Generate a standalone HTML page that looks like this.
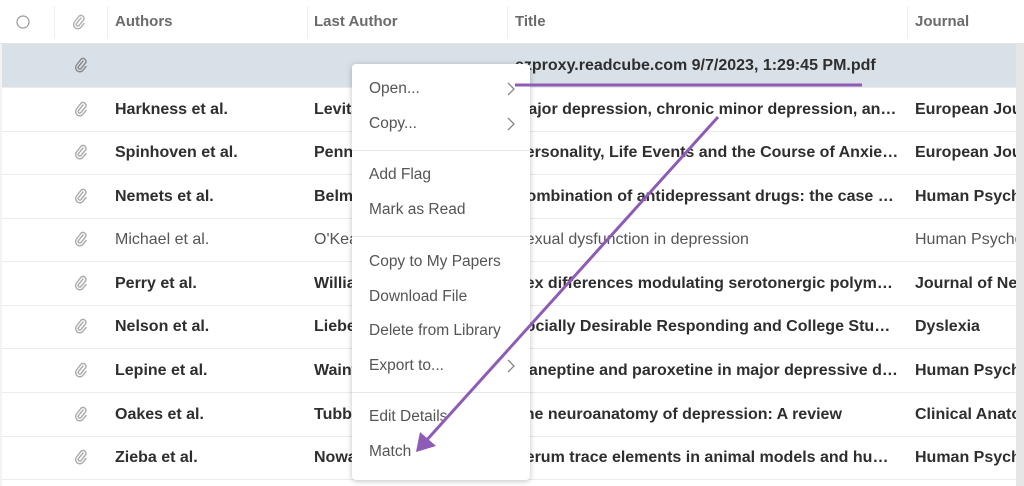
<!DOCTYPE html>
<html><head><meta charset="utf-8"><style>
*{margin:0;padding:0;box-sizing:border-box}
body{width:1024px;height:486px;overflow:hidden;background:#fff;font-family:"Liberation Sans",Arial,sans-serif;position:relative}
.hdr{position:absolute;left:0;top:0;width:1024px;height:44px;background:#fff}
.hdr span{position:absolute;top:13px;font-size:15px;font-weight:bold;color:#6b6b6b}
.vs{position:absolute;top:6px;width:1px;height:32px;background:#eee}
.row{position:absolute;left:2px;width:1014px;height:44px;background:#fff}
.row.sel{background:#d8e1e7}
.row span{position:absolute;top:13px;font-size:16px;font-weight:bold;color:#2e2e2e;white-space:nowrap;overflow:hidden}
.row.read span{font-weight:normal;color:#555}
.a{left:113px;width:190px}.l{left:312px;width:190px}.t{left:513px;width:384px;text-overflow:ellipsis}.j{left:913px;width:101px}
.clip{position:absolute;left:72px;top:13px}
.ln{position:absolute;left:2px;width:1014px;height:1px;background:#ececec}
.menu{position:absolute;left:352px;top:64px;width:178px;height:416px;background:#fff;border-radius:4px;box-shadow:0 1px 6px rgba(0,0,0,.25)}
.menu div{position:absolute;left:17px;font-size:15.5px;color:#555}
.menu svg{position:absolute;left:154px}
.menu hr{position:absolute;left:0;width:178px;border:0;border-top:1px solid #e8e8e8}
.sb{position:absolute;left:1016px;top:44px;width:8px;height:442px;background:#e6e6e6}
</style></head><body>
<div class="hdr">
<svg style="position:absolute;left:16px;top:15px" width="14" height="14"><circle cx="7" cy="7" r="6" fill="none" stroke="#999" stroke-width="1.2"/></svg>
<div class="vs" style="left:54px"></div>
<svg style="position:absolute;left:72px;top:14px" width="14" height="16" viewBox="0 0 14 16"><path d="M9 4 L4.5 9.5 a1.6 1.6 0 0 0 2.3 2.2 L11.5 6 a3 3 0 0 0 -4.3 -4 L2.5 8 a4.2 4.2 0 0 0 6 5.8 L12 9.5" fill="none" stroke="#b0b0b0" stroke-width="1.4" stroke-linecap="round"/></svg>
<div class="vs" style="left:107px"></div>
<span style="left:115px">Authors</span>
<div class="vs" style="left:307px"></div>
<span style="left:314px">Last Author</span>
<div class="vs" style="left:507px"></div>
<span style="left:515px">Title</span>
<div class="vs" style="left:907px"></div>
<span style="left:915px">Journal</span>
</div>

<div class="row sel" style="top:44px"><svg class="clip" width="14" height="16" viewBox="0 0 14 16"><path d="M9 4 L4.5 9.5 a1.6 1.6 0 0 0 2.3 2.2 L11.5 6 a3 3 0 0 0 -4.3 -4 L2.5 8 a4.2 4.2 0 0 0 6 5.8 L12 9.5" fill="none" stroke="#888" stroke-width="1.4" stroke-linecap="round"/></svg><span class="t">ezproxy.readcube.com 9/7/2023, 1:29:45 PM.pdf</span></div>
<div class="row" style="top:88px"><svg class="clip" width="14" height="16" viewBox="0 0 14 16"><path d="M9 4 L4.5 9.5 a1.6 1.6 0 0 0 2.3 2.2 L11.5 6 a3 3 0 0 0 -4.3 -4 L2.5 8 a4.2 4.2 0 0 0 6 5.8 L12 9.5" fill="none" stroke="#aaa" stroke-width="1.4" stroke-linecap="round"/></svg><span class="a">Harkness et al.</span><span class="l">Levitan</span><span class="t">Major depression, chronic minor depression, and dysthymia</span><span class="j">European Journal</span></div>
<div class="row" style="top:131px"><svg class="clip" width="14" height="16" viewBox="0 0 14 16"><path d="M9 4 L4.5 9.5 a1.6 1.6 0 0 0 2.3 2.2 L11.5 6 a3 3 0 0 0 -4.3 -4 L2.5 8 a4.2 4.2 0 0 0 6 5.8 L12 9.5" fill="none" stroke="#aaa" stroke-width="1.4" stroke-linecap="round"/></svg><span class="a">Spinhoven et al.</span><span class="l">Penninx</span><span class="t">Personality, Life Events and the Course of Anxiety and</span><span class="j">European Journal</span></div>
<div class="row" style="top:175px"><svg class="clip" width="14" height="16" viewBox="0 0 14 16"><path d="M9 4 L4.5 9.5 a1.6 1.6 0 0 0 2.3 2.2 L11.5 6 a3 3 0 0 0 -4.3 -4 L2.5 8 a4.2 4.2 0 0 0 6 5.8 L12 9.5" fill="none" stroke="#aaa" stroke-width="1.4" stroke-linecap="round"/></svg><span class="a">Nemets et al.</span><span class="l">Belmaker</span><span class="t">Combination of antidepressant drugs: the case of the</span><span class="j">Human Psychopharm</span></div>
<div class="row read" style="top:218px"><svg class="clip" width="14" height="16" viewBox="0 0 14 16"><path d="M9 4 L4.5 9.5 a1.6 1.6 0 0 0 2.3 2.2 L11.5 6 a3 3 0 0 0 -4.3 -4 L2.5 8 a4.2 4.2 0 0 0 6 5.8 L12 9.5" fill="none" stroke="#aaa" stroke-width="1.4" stroke-linecap="round"/></svg><span class="a">Michael et al.</span><span class="l">O'Keane</span><span class="t">Sexual dysfunction in depression</span><span class="j">Human Psychopharm</span></div>
<div class="row" style="top:262px"><svg class="clip" width="14" height="16" viewBox="0 0 14 16"><path d="M9 4 L4.5 9.5 a1.6 1.6 0 0 0 2.3 2.2 L11.5 6 a3 3 0 0 0 -4.3 -4 L2.5 8 a4.2 4.2 0 0 0 6 5.8 L12 9.5" fill="none" stroke="#aaa" stroke-width="1.4" stroke-linecap="round"/></svg><span class="a">Perry et al.</span><span class="l">Williams</span><span class="t">Sex differences modulating serotonergic polymorphisms</span><span class="j">Journal of Neuro</span></div>
<div class="row" style="top:305px"><svg class="clip" width="14" height="16" viewBox="0 0 14 16"><path d="M9 4 L4.5 9.5 a1.6 1.6 0 0 0 2.3 2.2 L11.5 6 a3 3 0 0 0 -4.3 -4 L2.5 8 a4.2 4.2 0 0 0 6 5.8 L12 9.5" fill="none" stroke="#aaa" stroke-width="1.4" stroke-linecap="round"/></svg><span class="a">Nelson et al.</span><span class="l">Liebenberg</span><span class="t">Socially Desirable Responding and College Students</span><span class="j">Dyslexia</span></div>
<div class="row" style="top:349px"><svg class="clip" width="14" height="16" viewBox="0 0 14 16"><path d="M9 4 L4.5 9.5 a1.6 1.6 0 0 0 2.3 2.2 L11.5 6 a3 3 0 0 0 -4.3 -4 L2.5 8 a4.2 4.2 0 0 0 6 5.8 L12 9.5" fill="none" stroke="#aaa" stroke-width="1.4" stroke-linecap="round"/></svg><span class="a">Lepine et al.</span><span class="l">Wainwright</span><span class="t">Tianeptine and paroxetine in major depressive disorder</span><span class="j">Human Psychopharm</span></div>
<div class="row" style="top:393px"><svg class="clip" width="14" height="16" viewBox="0 0 14 16"><path d="M9 4 L4.5 9.5 a1.6 1.6 0 0 0 2.3 2.2 L11.5 6 a3 3 0 0 0 -4.3 -4 L2.5 8 a4.2 4.2 0 0 0 6 5.8 L12 9.5" fill="none" stroke="#aaa" stroke-width="1.4" stroke-linecap="round"/></svg><span class="a">Oakes et al.</span><span class="l">Tubbs</span><span class="t">The neuroanatomy of depression: A review</span><span class="j">Clinical Anatomy</span></div>
<div class="row" style="top:436px"><svg class="clip" width="14" height="16" viewBox="0 0 14 16"><path d="M9 4 L4.5 9.5 a1.6 1.6 0 0 0 2.3 2.2 L11.5 6 a3 3 0 0 0 -4.3 -4 L2.5 8 a4.2 4.2 0 0 0 6 5.8 L12 9.5" fill="none" stroke="#aaa" stroke-width="1.4" stroke-linecap="round"/></svg><span class="a">Zieba et al.</span><span class="l">Nowak</span><span class="t">Serum trace elements in animal models and human depression</span><span class="j">Human Psychopharm</span></div>
<div class="ln" style="top:43px;left:0;width:1024px;background:#e4e4e4"></div>
<div class="ln" style="top:87px"></div><div class="ln" style="top:131px"></div><div class="ln" style="top:174px"></div><div class="ln" style="top:218px"></div><div class="ln" style="top:261px"></div><div class="ln" style="top:305px"></div><div class="ln" style="top:348px"></div><div class="ln" style="top:392px"></div><div class="ln" style="top:436px"></div><div class="ln" style="top:479px"></div>
<div style="position:absolute;left:0;top:44px;width:2px;height:442px;background:#f3f3f3"></div>
<div class="sb"></div>

<div class="menu">
<div style="top:16px">Open...</div><svg style="top:18px" width="10" height="14"><path d="M2 1 L8 7 L2 13" fill="none" stroke="#888" stroke-width="1.3"/></svg>
<div style="top:51px">Copy...</div><svg style="top:53px" width="10" height="14"><path d="M2 1 L8 7 L2 13" fill="none" stroke="#888" stroke-width="1.3"/></svg>
<hr style="top:86px">
<div style="top:102px">Add Flag</div>
<div style="top:137px">Mark as Read</div>
<hr style="top:172px">
<div style="top:189px">Copy to My Papers</div>
<div style="top:224px">Download File</div>
<div style="top:258px">Delete from Library</div>
<div style="top:293px">Export to...</div><svg style="top:295px" width="10" height="14"><path d="M2 1 L8 7 L2 13" fill="none" stroke="#888" stroke-width="1.3"/></svg>
<hr style="top:328px">
<div style="top:344px">Edit Details</div>
<div style="top:379px">Match</div>
</div>

<svg style="position:absolute;left:0;top:0" width="1024" height="486">
<line x1="515" y1="85" x2="862" y2="85" stroke="#8e5bb5" stroke-width="3"/>
<line x1="718" y1="117" x2="425" y2="442" stroke="#8e5bb5" stroke-width="3"/>
<polygon points="416,452 420,432 436,446" fill="#8e5bb5"/>
</svg>
</body></html>
